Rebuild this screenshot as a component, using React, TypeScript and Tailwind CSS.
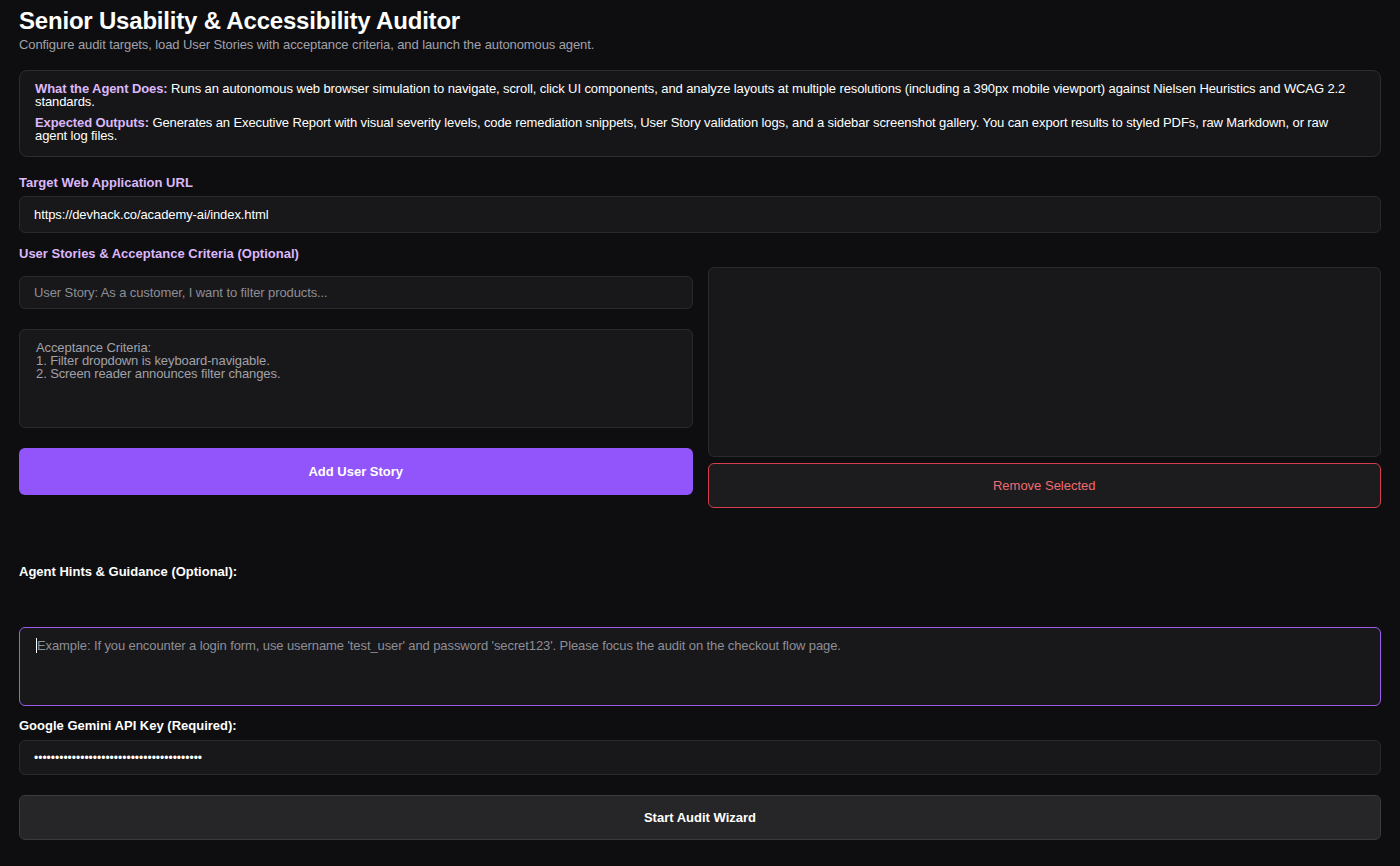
import React from "react";

export default function App() {
  const font = { fontFamily: '"Liberation Sans", Arial, Helvetica, sans-serif' };
  return (
    <div className="min-h-[866px] w-full bg-[#0e0e10] text-white" style={font}>
      <div className="px-[19px] pt-[6px] pb-[26px] flex flex-col">
        <h1 className="text-[24px] leading-[30px] font-bold text-white tracking-[-0.2px]">
          Senior Usability &amp; Accessibility Auditor
        </h1>
        <p className="text-[13px] leading-[16px] text-[#a1a1aa] mt-[1px] tracking-[-0.1px]">
          Configure audit targets, load User Stories with acceptance criteria, and launch the autonomous agent.
        </p>

        <div className="mt-[17px] rounded-[8px] border border-[#2c2c30] bg-[#161618] pl-[15px] pr-[20px] pt-[11px] pb-[14px] text-[13px] leading-[13px] text-white tracking-[-0.1px]">
          <p>
            <span className="font-bold text-[#dcb8fb]">What the Agent Does:</span> Runs an autonomous web browser
            simulation to navigate, scroll, click UI components, and analyze layouts at multiple resolutions (including a
            390px mobile viewport) against Nielsen Heuristics and WCAG 2.2 standards.
          </p>
          <p className="mt-[8px]">
            <span className="font-bold text-[#dcb8fb]">Expected Outputs:</span> Generates an Executive Report with visual
            severity levels, code remediation snippets, User Story validation logs, and a sidebar screenshot gallery. You
            can export results to styled PDFs, raw Markdown, or raw agent log files.
          </p>
        </div>

        <label className="mt-[18px] text-[13px] leading-[16px] font-bold text-[#dcb8fb]">Target Web Application URL</label>
        <div className="mt-[5px] h-[37px] rounded-[6px] border border-[#2a2a2e] bg-[#18181b] px-[14px] flex items-center text-[13px] text-white tracking-[-0.1px]">
          https://devhack.co/academy-ai/index.html
        </div>

        <label className="mt-[13px] text-[13px] leading-[16px] font-bold text-[#dcb8fb]">
          User Stories &amp; Acceptance Criteria (Optional)
        </label>

        <div className="mt-[5px] grid grid-cols-2 gap-[15px]">
          <div className="flex flex-col pt-[9px]">
            <div className="h-[33px] rounded-[6px] border border-[#2a2a2e] bg-[#18181b] px-[14px] flex items-center text-[13px] text-[#8e8e95] tracking-[-0.1px]">
              User Story: As a customer, I want to filter products...
            </div>
            <div className="mt-[20px] h-[99px] rounded-[6px] border border-[#2a2a2e] bg-[#18181b] px-[16px] pt-[11px] text-[13px] leading-[13px] text-[#a1a1a8] tracking-[-0.1px]">
              <div>Acceptance Criteria:</div>
              <div>1. Filter dropdown is keyboard-navigable.</div>
              <div>2. Screen reader announces filter changes.</div>
            </div>
            <button className="mt-[20px] h-[47px] rounded-[6px] bg-[#9155fb] text-white text-[13px] font-bold">
              Add User Story
            </button>
          </div>
          <div className="flex flex-col">
            <div className="h-[190px] rounded-[6px] border border-[#2a2a2e] bg-[#18181b]" />
            <button className="mt-[6px] h-[45px] rounded-[6px] border border-[#d43f4d] bg-[#1c1c1f] text-[#f06a72] text-[13px]">
              Remove Selected
            </button>
          </div>
        </div>

        <label className="mt-[56px] text-[13px] leading-[16px] font-bold text-white">Agent Hints &amp; Guidance (Optional):</label>
        <div className="mt-[47px] h-[79px] rounded-[6px] border border-[#9b5de5] bg-[#18181b] px-[16px] pt-[10px] text-[13px] leading-[16px] text-[#8e8e95] tracking-[-0.1px]">
          <span className="inline-block w-[1px] h-[15px] bg-white align-[-3px]" />
          Example: If you encounter a login form, use username 'test_user' and password 'secret123'. Please focus the audit
          on the checkout flow page.
        </div>

        <label className="mt-[12px] text-[13px] leading-[16px] font-bold text-white">Google Gemini API Key (Required):</label>
        <div className="mt-[6px] h-[35px] rounded-[6px] border border-[#2a2a2e] bg-[#18181b] px-[14px] flex items-center text-[12px] text-white">
          ••••••••••••••••••••••••••••••••••••••••
        </div>

        <button className="mt-[20px] h-[45px] rounded-[6px] border border-[#3a3a3e] bg-[#262628] text-white text-[13px] font-bold">
          Start Audit Wizard
        </button>
      </div>
    </div>
  );
}
